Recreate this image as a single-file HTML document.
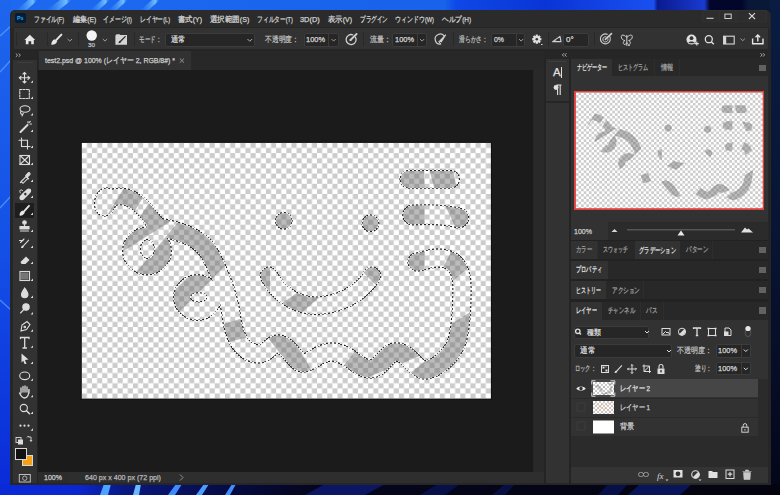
<!DOCTYPE html><html><head><meta charset="utf-8"><style>*{margin:0;padding:0;box-sizing:border-box}
html,body{width:780px;height:495px;overflow:hidden}
body{position:relative;font-family:"Liberation Sans",sans-serif;background:#1558e6}
.a{position:absolute}
.t{position:absolute;white-space:nowrap;line-height:10px;-webkit-text-stroke:0.25px currentColor}
svg{position:absolute;overflow:visible}</style></head><body>
<svg style="left:0;top:0" width="780" height="495">
<defs>
<linearGradient id="wt" x1="0" x2="1" y1="0" y2="0">
<stop offset="0" stop-color="#1d6af0"/><stop offset=".57" stop-color="#1862ec"/><stop offset=".585" stop-color="#0e48e6"/>
<stop offset=".70" stop-color="#0a34d6"/><stop offset=".838" stop-color="#1a50f0"/><stop offset=".843" stop-color="#0a1a90"/><stop offset=".903" stop-color="#1a3ad0"/><stop offset=".91" stop-color="#02062a"/><stop offset=".95" stop-color="#02062a"/><stop offset=".96" stop-color="#0a1838"/><stop offset="1" stop-color="#0a1838"/></linearGradient>
<linearGradient id="wl" x1="0" x2="0" y1="0" y2="1">
<stop offset="0" stop-color="#1e66ee"/><stop offset=".5" stop-color="#1450e6"/><stop offset="1" stop-color="#0a2ad8"/></linearGradient>
<linearGradient id="wr" x1="0" x2="0" y1="0" y2="1">
<stop offset="0" stop-color="#0a1c42"/><stop offset=".5" stop-color="#081432"/><stop offset="1" stop-color="#04061a"/></linearGradient>
<linearGradient id="wbm" x1="0" x2="1" y1="0" y2="0">
<stop offset="0" stop-color="#0a2ad8"/><stop offset=".1" stop-color="#0a26d0"/><stop offset=".16" stop-color="#081880"/><stop offset=".3" stop-color="#060a40"/>
<stop offset=".4" stop-color="#05061e"/><stop offset="1" stop-color="#04040f"/></linearGradient>
</defs>
<rect x="0" y="0" width="780" height="12" fill="url(#wt)"/>
<rect x="0" y="0" width="11" height="495" fill="url(#wl)"/>
<rect x="770" y="0" width="10" height="495" fill="url(#wr)"/>
<rect x="0" y="484" width="780" height="11" fill="url(#wbm)"/>
<linearGradient id="sk" x1="0" x2="1" y1="0" y2="0"><stop offset="0" stop-color="#2a7af8" stop-opacity="0"/><stop offset=".8" stop-color="#7cc8ff" stop-opacity=".9"/><stop offset="1" stop-color="#2a7af8" stop-opacity="0"/></linearGradient>
<g fill="url(#sk)">
<path d="M14 12 L28 0 L38 0 L24 12Z"/><path d="M44 12 L60 0 L72 0 L56 12Z"/><path d="M88 12 L102 0 L110 0 L96 12Z"/><path d="M106 12 L120 0 L128 0 L114 12Z"/><path d="M138 12 L152 0 L160 0 L146 12Z"/></g>
<g stroke="#6ab0ff" stroke-width="1.4" fill="none" opacity=".6">
<path d="M0 36 L11 26"/><path d="M0 72 L11 60"/><path d="M0 208 L11 196"/><path d="M0 300 L11 310"/></g>
<g>
<path d="M100 495 L104 484 L111 484 L108 495Z" fill="#4ea2ff"/>
<path d="M133 495 L136 484 L141 484 L139 495Z" fill="#6cb8ff"/>
<path d="M168 495 L176 484 L182 484 L175 495Z" fill="#3a8cff"/>
<path d="M196 495 L204 484 L209 484 L202 495Z" fill="#4a9cff"/>
<path d="M225 495 L232 484 L236 484 L230 495Z" fill="#3f8cff"/>
<path d="M305 495 L325 484 L385 484 L365 495Z" fill="#0c1c78" opacity=".8"/>
<path d="M420 495 L438 484 L460 484 L445 495Z" fill="#0a1660" opacity=".7"/>
<path d="M492 495 L505 484 L515 484 L505 495Z" fill="#0a1660" opacity=".6"/>
<path d="M598 495 L608 484 L628 484 L618 495Z" fill="#0a1660" opacity=".7"/>
<path d="M628 495 L640 484 L692 484 L680 495Z" fill="#0c1c78" opacity=".7"/>
</g>
</svg>
<div class="a" style="left:10px;top:10px;width:761.3px;height:475px;background:#262626;border-radius:5px 5px 0 0"></div>
<div class="a" style="left:11px;top:10px;width:759px;height:17.5px;background:#2b2b2b;border-radius:5px 5px 0 0"></div>
<div class="a" style="left:15px;top:13.2px;width:11px;height:10px;background:#001e36;border-radius:2px"></div>
<div class="t" style="left:17.2px;top:14.5px;font-size:5.8px;color:#31a8ff;font-weight:bold;transform:scaleX(0.930);transform-origin:0 0;-webkit-text-stroke:0;line-height:7px">Ps</div>
<div class="t" style="left:34.3px;top:14.5px;font-size:7.6px;color:#d4d4d4;font-weight:normal;transform:scaleX(0.719);transform-origin:0 0;">ファイル(F)</div>
<div class="t" style="left:72.7px;top:14.5px;font-size:7.6px;color:#d4d4d4;font-weight:normal;transform:scaleX(0.892);transform-origin:0 0;">編集(E)</div>
<div class="t" style="left:103px;top:14.5px;font-size:7.6px;color:#d4d4d4;font-weight:normal;transform:scaleX(0.740);transform-origin:0 0;">イメージ(I)</div>
<div class="t" style="left:140px;top:14.5px;font-size:7.6px;color:#d4d4d4;font-weight:normal;transform:scaleX(0.727);transform-origin:0 0;">レイヤー(L)</div>
<div class="t" style="left:178px;top:14.5px;font-size:7.6px;color:#d4d4d4;font-weight:normal;transform:scaleX(0.919);transform-origin:0 0;">書式(Y)</div>
<div class="t" style="left:210px;top:14.5px;font-size:7.6px;color:#d4d4d4;font-weight:normal;transform:scaleX(0.933);transform-origin:0 0;">選択範囲(S)</div>
<div class="t" style="left:257px;top:14.5px;font-size:7.6px;color:#d4d4d4;font-weight:normal;transform:scaleX(0.720);transform-origin:0 0;">フィルター(T)</div>
<div class="t" style="left:300px;top:14.5px;font-size:7.6px;color:#d4d4d4;font-weight:normal;transform:scaleX(0.973);transform-origin:0 0;">3D(D)</div>
<div class="t" style="left:328px;top:14.5px;font-size:7.6px;color:#d4d4d4;font-weight:normal;transform:scaleX(0.919);transform-origin:0 0;">表示(V)</div>
<div class="t" style="left:360px;top:14.5px;font-size:7.6px;color:#d4d4d4;font-weight:normal;transform:scaleX(0.700);transform-origin:0 0;">プラグイン</div>
<div class="t" style="left:395px;top:14.5px;font-size:7.6px;color:#d4d4d4;font-weight:normal;transform:scaleX(0.747);transform-origin:0 0;">ウィンドウ(W)</div>
<div class="t" style="left:441.7px;top:14.5px;font-size:7.6px;color:#d4d4d4;font-weight:normal;transform:scaleX(0.842);transform-origin:0 0;">ヘルプ(H)</div>
<svg style="left:700px;top:10px;" width="71" height="17" viewBox="0 0 71 17">
<rect x="2.5" y="0.5" width="64" height="11.2" rx="1.5" fill="#2d2d2d" stroke="#383838" stroke-width=".6"/><path d="M19.4 0.5 V11.7 M36 0.5 V11.7" stroke="#383838" stroke-width=".6"/>
<path d="M6.5 8.3 H13.6" stroke="#cfcfcf" stroke-width="1.1"/>
<rect x="24.9" y="4.1" width="6.3" height="4.4" fill="none" stroke="#cfcfcf" stroke-width="1"/>
<path d="M48.9 3.2 L55 9 M55 3.2 L48.9 9" stroke="#d8d8d8" stroke-width="1.1"/>
</svg>
<div class="a" style="left:12.5px;top:27px;width:756px;height:23px;background:#323232;border:1px solid #262626"></div>
<div class="a" style="left:16.3px;top:32px;width:1px;height:14px;background:#282828;"></div>
<div class="a" style="left:46.5px;top:32px;width:1px;height:14px;background:#282828;"></div>
<div class="a" style="left:77.5px;top:32px;width:1px;height:14px;background:#282828;"></div>
<div class="a" style="left:134px;top:32px;width:1px;height:14px;background:#282828;"></div>
<div class="a" style="left:363px;top:32px;width:1px;height:14px;background:#282828;"></div>
<div class="a" style="left:452.7px;top:32px;width:1px;height:14px;background:#282828;"></div>
<div class="a" style="left:547.5px;top:32px;width:1px;height:14px;background:#282828;"></div>
<div class="a" style="left:594px;top:32px;width:1px;height:14px;background:#282828;"></div>
<svg style="left:0px;top:0px;" width="780" height="60" viewBox="0 0 780 60">
<path d="M24.5 40 L29.8 34.8 L35.2 40 H33.8 V44.3 H31.2 V41.3 H28.5 V44.3 H25.8 V40Z" fill="#e8e8e8"/>
<path d="M51.4 44.7 C51.1 42.4 52.3 40 54.9 39.2 L57.1 41.4 C56.3 43.8 53.8 45 51.4 44.7Z" fill="#e6e6e6"/>
<path d="M56.2 40.2 L61.4 34.6" stroke="#e6e6e6" stroke-width="1.9" stroke-linecap="round"/>
<path d="M67.6 39 L69.8 41.1 L72 39" fill="none" stroke="#a8a8a8" stroke-width=".9"/>
<circle cx="91.7" cy="35.5" r="5.2" fill="#f4f4f4"/>
<path d="M102.8 39 L105 41.1 L107.2 39" fill="none" stroke="#a8a8a8" stroke-width=".9"/>
<path d="M115.4 35.6 L116.6 34.3 H119.5 L120.5 35 H127 V44.7 H115.4Z" fill="#d4d4d4"/>
<path d="M118.6 43.2 C118.4 42 119 41 120.3 40.7 L121.2 41.6 C121 42.8 120 43.3 118.6 43.2Z" fill="#2a2a2a"/>
<path d="M120.8 41 L125.2 36.6" stroke="#2a2a2a" stroke-width="1.3" stroke-linecap="round"/>
</svg>
<div class="t" style="left:88.3px;top:42.2px;font-size:6.2px;color:#b8c4d0;font-weight:normal;transform:scaleX(1.016);transform-origin:0 0;line-height:6px">30</div>
<div class="t" style="left:139px;top:35px;font-size:8px;color:#bcbcbc;font-weight:normal;transform:scaleX(0.688);transform-origin:0 0;">モード：</div>
<div class="a" style="left:164.7px;top:32.8px;width:90.7px;height:14.2px;background:#262626;border:1px solid #3c3c3c;border-radius:2px"></div>
<div class="t" style="left:170.5px;top:35px;font-size:8px;color:#d8d8d8;font-weight:normal;transform:scaleX(0.906);transform-origin:0 0;">通常</div>
<svg style="left:0px;top:0px;" width="780" height="60" viewBox="0 0 780 60"><path d="M247.5 39 L249.8 41.3 L252.1 39" fill="none" stroke="#bbb" stroke-width=".9"/></svg>
<div class="t" style="left:265px;top:35px;font-size:8px;color:#bcbcbc;font-weight:normal;transform:scaleX(0.850);transform-origin:0 0;">不透明度：</div>
<div class="a" style="left:303.6px;top:32.8px;width:35px;height:14.2px;background:#262626;border:1px solid #3c3c3c;border-radius:2px"></div>
<div class="a" style="left:328px;top:32.8px;width:1px;height:14.2px;background:#3c3c3c;"></div>
<div class="t" style="left:306px;top:35px;font-size:8px;color:#d8d8d8;font-weight:normal;transform:scaleX(0.928);transform-origin:0 0;">100%</div>
<div class="t" style="left:369.5px;top:35px;font-size:8px;color:#bcbcbc;font-weight:normal;transform:scaleX(0.875);transform-origin:0 0;">流量：</div>
<div class="a" style="left:392.4px;top:32.8px;width:34.3px;height:14.2px;background:#262626;border:1px solid #3c3c3c;border-radius:2px"></div>
<div class="a" style="left:417px;top:32.8px;width:1px;height:14.2px;background:#3c3c3c;"></div>
<div class="t" style="left:395px;top:35px;font-size:8px;color:#d8d8d8;font-weight:normal;transform:scaleX(0.928);transform-origin:0 0;">100%</div>
<div class="t" style="left:459px;top:35px;font-size:8px;color:#bcbcbc;font-weight:normal;transform:scaleX(0.725);transform-origin:0 0;">滑らかさ：</div>
<div class="a" style="left:491px;top:32.8px;width:34px;height:14.2px;background:#262626;border:1px solid #3c3c3c;border-radius:2px"></div>
<div class="a" style="left:516px;top:32.8px;width:1px;height:14.2px;background:#3c3c3c;"></div>
<div class="t" style="left:493.5px;top:35px;font-size:8px;color:#d8d8d8;font-weight:normal;transform:scaleX(0.865);transform-origin:0 0;">0%</div>
<div class="a" style="left:563px;top:33px;width:26px;height:13.5px;background:#262626;border:1px solid #3c3c3c;border-radius:2px"></div>
<div class="t" style="left:566px;top:35px;font-size:8px;color:#d8d8d8;font-weight:normal;">0°</div>
<svg style="left:0px;top:0px;" width="780" height="60" viewBox="0 0 780 60">
<path d="M331.5 39 L333.6 41.1 L335.7 39" fill="none" stroke="#a8a8a8" stroke-width=".9"/>
<path d="M420 39 L422.1 41.1 L424.2 39" fill="none" stroke="#a8a8a8" stroke-width=".9"/>
<path d="M519 39 L521.1 41.1 L523.2 39" fill="none" stroke="#a8a8a8" stroke-width=".9"/>
<path d="M355.3 36.8 A5 5 0 1 1 353.2 35" fill="none" stroke="#cfcfcf" stroke-width="1.3"/>
<path d="M350.5 40 L356.6 34" stroke="#cfcfcf" stroke-width="1.8" stroke-linecap="round"/>
<circle cx="350.5" cy="40" r="1.1" fill="#cfcfcf"/>
<path d="M444.5 36.6 A5 5 0 1 0 441 44" fill="none" stroke="#cfcfcf" stroke-width="1.2"/>
<path d="M438.5 41.5 L445.5 34.3 L446.2 35 L441.5 42.5 Z" fill="#cfcfcf"/>
<path d="M438.5 41.5 L441 44.2" stroke="#cfcfcf" stroke-width="1"/>
<g transform="translate(536.8,39.2)" fill="#e0e0e0">
<circle r="3.3"/>
<rect x="-1.1" y="-4.6" width="2.2" height="2" /><rect x="-1.1" y="2.6" width="2.2" height="2"/>
<rect x="-4.6" y="-1.1" width="2" height="2.2"/><rect x="2.6" y="-1.1" width="2" height="2.2"/>
<rect x="-1.1" y="-4.6" width="2.2" height="2" transform="rotate(45)"/><rect x="-1.1" y="2.6" width="2.2" height="2" transform="rotate(45)"/>
<rect x="-4.6" y="-1.1" width="2" height="2.2" transform="rotate(45)"/><rect x="2.6" y="-1.1" width="2" height="2.2" transform="rotate(45)"/>
<circle r="1.3" fill="#323232"/>
</g>
<path d="M541 44.5 H542.6" stroke="#cfcfcf" stroke-width="1"/>
<path d="M552.6 41.6 H561 L560 36.4 Z" fill="none" stroke="#cfcfcf" stroke-width="1.1" stroke-linejoin="round"/>
<path d="M555.8 41.6 A3 3 0 0 0 555.2 39.6" fill="none" stroke="#cfcfcf" stroke-width=".8"/>
<path d="M609.6 36.2 A5 5 0 1 1 607.6 34.4" fill="none" stroke="#cfcfcf" stroke-width="1.1"/>
<path d="M607.8 38.3 A2.6 2.6 0 1 1 606.4 36.9" fill="none" stroke="#cfcfcf" stroke-width="1"/>
<path d="M605.3 39.3 L611.5 33.6" stroke="#cfcfcf" stroke-width="1.6" stroke-linecap="round"/>
<path d="M626.8 35 V46 M626.8 37.5 C624.5 35 621.5 34 621.3 36.5 C621.2 39 623 40.3 625 40.5 C623 41.3 622.8 43.5 624 44.3 C625.2 45 626.5 43.6 626.8 42.5 M626.8 37.5 C629.1 35 632.1 34 632.3 36.5 C632.4 39 630.6 40.3 628.6 40.5 C630.6 41.3 630.8 43.5 629.6 44.3 C628.4 45 627.1 43.6 626.8 42.5" fill="none" stroke="#cfcfcf" stroke-width="1"/>
<path d="M628 45.5 H630" stroke="#cfcfcf" stroke-width=".8"/>
<circle cx="691.5" cy="39.6" r="5" fill="#e0e0e0"/>
<circle cx="691.5" cy="38.2" r="1.9" fill="#323232"/>
<path d="M688.3 43.3 C688.8 40.8 694.2 40.8 694.7 43.3Z" fill="#323232"/>
<path d="M694.8 43.6 H698.8 M696.8 41.6 V45.6" stroke="#e0e0e0" stroke-width="1.1"/>
<circle cx="708.8" cy="39.2" r="3.5" fill="none" stroke="#e0e0e0" stroke-width="1.3"/>
<path d="M711.3 41.7 L713.8 44.2" stroke="#e0e0e0" stroke-width="1.5"/>
<rect x="723.6" y="36.2" width="10.6" height="7.8" fill="none" stroke="#d8d8d8" stroke-width="1.1"/>
<rect x="723.6" y="36.2" width="2.6" height="7.8" fill="#d8d8d8"/>
<path d="M740.5 38.6 L742.7 40.7 L744.9 38.6" fill="none" stroke="#a8a8a8" stroke-width=".9"/>
<path d="M752.6 38.5 V43.8 H763 V38.5" fill="none" stroke="#e6e6e6" stroke-width="1.4"/>
<path d="M757.8 41.5 V35 M755.5 37.2 L757.8 34.9 L760.1 37.2" fill="none" stroke="#e6e6e6" stroke-width="1.4"/>
</svg>
<div class="a" style="left:12.5px;top:50.5px;width:24.5px;height:9.5px;background:#262626;"></div>
<svg style="left:0px;top:0px;" width="60" height="60" viewBox="0 0 60 60"><path d="M15.8 53.5 L17.6 55.2 L15.8 56.9 M18.6 53.5 L20.4 55.2 L18.6 56.9" fill="none" stroke="#c8c8c8" stroke-width=".8"/></svg>
<div class="a" style="left:12.5px;top:60px;width:24.8px;height:424px;background:#323232;"></div>
<div class="a" style="left:17px;top:61.8px;width:16px;height:1px;background:#3e3e3e;"></div>
<div class="a" style="left:15px;top:202.8px;width:19px;height:14.8px;background:#1e1e1e;"></div>
<svg style="left:0px;top:0px;" width="60" height="495" viewBox="0 0 60 495">
<g fill="none" stroke="#dcdcdc" stroke-width="1.1" stroke-linecap="round">
<!-- move 77.8 -->
<path d="M24.5 72.5 V83 M19.3 77.8 H29.7 M23 74 L24.5 72.5 L26 74 M23 81.5 L24.5 83 L26 81.5 M21 76.3 L19.3 77.8 L21 79.3 M28 76.3 L29.7 77.8 L28 79.3"/>
<!-- marquee 94 -->
<rect x="19.8" y="89.5" width="9.5" height="9" stroke-dasharray="2 1.3"/>
<!-- lasso 110.5 -->
<ellipse cx="25" cy="109" rx="5" ry="3.3"/><path d="M21 111 C20 113 21 115 23 114 L22 116"/>
<!-- wand 127 -->
<path d="M20.5 132 L27.5 125" stroke-width="2"/><path d="M28 121.5 V123 M30 124 H31.5 M29.3 122.3 L30.3 121.3"/>
<!-- crop 143 -->
<path d="M21.5 138 V146.5 H30 M19 140.3 H27.5 V149"/>
<!-- frame 160 -->
<rect x="20" y="155.5" width="9.5" height="9"/><path d="M20 155.5 L29.5 164.5 M29.5 155.5 L20 164.5"/>
<!-- eyedropper 177 -->
<path d="M21.2 181.5 L20.4 182.6 M21.2 181.5 L26.2 176.5 L28 178.3 L23 183.3 Z" stroke-width="1.1"/><path d="M25.6 175.9 L28.6 178.9 M27.2 177.2 L29.6 174.8 C30.6 173.8 29.6 172.2 28.4 172.8 L26 175.4" fill="#dcdcdc" stroke-width="1.2"/>
<!-- healing 193 -->
<path d="M20.2 195.8 L26.8 189.2 C27.8 188.2 29.8 188.2 30.6 189 C31.4 189.8 31.4 191.8 30.4 192.8 L23.8 199.4 C22.8 200.4 20.8 200.4 20 199.6 C19.2 198.8 19.2 196.8 20.2 195.8Z" fill="#dcdcdc" stroke="none"/><rect x="23.6" y="192.4" width="3.4" height="3.4" transform="rotate(45 25.3 194.1)" fill="#323232"/><path d="M22.5 190.5 C19.8 188.5 19 191.5 20.4 193" stroke-width="1"/>
<!-- brush 210 -->
<path d="M19.6 215.6 C19.3 213.4 20.4 211.2 22.8 210.5 L24.8 212.5 C24.1 214.7 21.8 215.9 19.6 215.6Z" fill="#e8e8e8" stroke="none"/><path d="M24 211.3 L29 205.8" stroke="#e8e8e8" stroke-width="1.8"/>
<!-- stamp 227 -->
<circle cx="24.5" cy="222.5" r="1.8" fill="#dcdcdc"/><path d="M24.5 224.5 V226.5 M20 226.5 H29 V229 H20Z M20.5 231 H28.5" fill="#dcdcdc"/>
<!-- history brush 243 -->
<path d="M21 248 C21 246.5 22 245.5 23 245.5 L28.5 239.5 L29.3 240.3 L23.8 246.3 C23.8 247.5 23 248.3 21 248Z" fill="#dcdcdc" stroke="none"/><path d="M19.5 240.5 H23 M20.5 242.5 L24 239"/>
<!-- eraser 259 -->
<path d="M20.5 262 L26 256.5 L29.5 260 L25.5 264 H21.5Z" fill="#dcdcdc" stroke="none"/>
</g>
<g fill="none" stroke="#dcdcdc" stroke-width="1.1" stroke-linecap="round">
<!-- gradient 276 -->
<rect x="20" y="271.5" width="9.5" height="9"/><rect x="21" y="272.5" width="7.5" height="7" fill="#777" stroke="none"/>
<!-- blur 293 -->
<path d="M24.7 288 C22.5 291 21.5 293 21.5 294.5 A3.2 3.2 0 0 0 28 294.5 C28 293 27 291 24.7 288Z" fill="#dcdcdc"/>
<!-- dodge 309.5 -->
<circle cx="26" cy="307" r="3.2" fill="#dcdcdc"/><path d="M23.8 309.5 L20.5 313"/>
<!-- pen 326.7 -->
<path d="M21 331 L22 325 L27 321.5 L30 324.5 L26.5 329.5Z"/><circle cx="24.8" cy="327" r=".8"/>
<!-- type 342.8 -->
<path d="M20.5 338.5 V337.5 H29 V338.5 M24.7 337.5 V348 M23 348 H26.5" stroke-width="1.3"/>
<!-- path select 359 -->
<path d="M21.5 353.5 L28.5 359.5 L25 360 L26.5 364 H24.5 L23.3 360.8 L21.5 362.5Z" fill="#dcdcdc" stroke="none"/>
<!-- ellipse 375.8 -->
<ellipse cx="24.7" cy="375.8" rx="5" ry="3.8"/>
<!-- hand 392.3 -->
<path d="M21 393 V388 M23 392 V386.5 M25 392 V386 M27 392 V387 M29 393 V389 C29 396 27 398 24.5 398 C22 398 21 396 19.5 393" stroke-width="1.3"/>
<!-- zoom 409 -->
<circle cx="23.8" cy="408" r="3.6"/><path d="M26.5 410.7 L29.5 413.7" stroke-width="1.5"/>
</g>
<g fill="#dcdcdc">
<circle cx="20.5" cy="425.7" r="1.1"/><circle cx="24.5" cy="425.7" r="1.1"/><circle cx="28.5" cy="425.7" r="1.1"/>
<rect x="16" y="437.5" width="5" height="5" fill="none" stroke="#dcdcdc" stroke-width=".9"/><rect x="18" y="439.5" width="5" height="5"/>
<path d="M27 437.5 L28.5 436 L28.5 437 H31 V441 M30 440 L31 441.5 L32 440" fill="none" stroke="#dcdcdc" stroke-width=".9"/>
</g>
<g fill="#dcdcdc"><path d="M30.6 82.8 L33 80.39999999999999 L33 82.8Z"/><path d="M30.6 99 L33 96.6 L33 99Z"/><path d="M30.6 115.5 L33 113.1 L33 115.5Z"/><path d="M30.6 132 L33 129.6 L33 132Z"/><path d="M30.6 148 L33 145.6 L33 148Z"/><path d="M30.6 165 L33 162.6 L33 165Z"/><path d="M30.6 182 L33 179.6 L33 182Z"/><path d="M30.6 198 L33 195.6 L33 198Z"/><path d="M30.6 215 L33 212.6 L33 215Z"/><path d="M30.6 232 L33 229.6 L33 232Z"/><path d="M30.6 248 L33 245.6 L33 248Z"/><path d="M30.6 264 L33 261.6 L33 264Z"/><path d="M30.6 281 L33 278.6 L33 281Z"/><path d="M30.6 298 L33 295.6 L33 298Z"/><path d="M30.6 314.5 L33 312.1 L33 314.5Z"/><path d="M30.6 331.7 L33 329.3 L33 331.7Z"/><path d="M30.6 347.8 L33 345.40000000000003 L33 347.8Z"/><path d="M30.6 364 L33 361.6 L33 364Z"/><path d="M30.6 380.8 L33 378.40000000000003 L33 380.8Z"/><path d="M30.6 397.3 L33 394.90000000000003 L33 397.3Z"/><path d="M30.6 414 L33 411.6 L33 414Z"/><path d="M30.6 430.7 L33 428.3 L33 430.7Z"/></g></svg>
<div class="a" style="left:21.5px;top:454.6px;width:11.5px;height:11.8px;background:#f6a113;border:1px solid #d8d8d8"></div>
<div class="a" style="left:15px;top:448px;width:12.4px;height:12px;background:#121212;border:1px solid #d8d8d8"></div>
<svg style="left:0px;top:0px;" width="60" height="495" viewBox="0 0 60 495"><rect x="19.3" y="474.5" width="11" height="7.5" fill="none" stroke="#bdbdbd" stroke-width="1"/><circle cx="24.8" cy="478.2" r="2.2" fill="none" stroke="#bdbdbd" stroke-width=".9"/></svg>
<div class="a" style="left:37.3px;top:50.5px;width:1px;height:434px;background:#222;"></div>
<div class="a" style="left:38.3px;top:50.5px;width:505.7px;height:19.2px;background:#282828;"></div>
<div class="a" style="left:39px;top:51.3px;width:151.8px;height:18.4px;background:#323232;"></div>
<div class="t" style="left:45px;top:55.5px;font-size:8px;color:#d0d0d0;font-weight:normal;transform:scaleX(0.867);transform-origin:0 0;">test2.psd @ 100% (レイヤー 2, RGB/8#) *</div>
<svg style="left:0px;top:0px;" width="200" height="70" viewBox="0 0 200 70"><path d="M179.8 58.5 L184 62.7 M184 58.5 L179.8 62.7" stroke="#9a9a9a" stroke-width=".9"/></svg>
<div class="a" style="left:38.3px;top:69.7px;width:495.2px;height:402.8px;background:#1b1b1b;"></div>
<div class="a" style="left:533.5px;top:69.7px;width:10.5px;height:402.8px;background:#292929;"></div>
<div class="a" style="left:38.3px;top:472.3px;width:505.7px;height:10.5px;background:#2c2c2c;"></div>
<div class="a" style="left:69px;top:472.3px;width:475px;height:10.5px;background:#2e2e2e;"></div>
<div class="t" style="left:44px;top:473px;font-size:8px;color:#cfcfcf;font-weight:normal;transform:scaleX(0.879);transform-origin:0 0;">100%</div>
<div class="t" style="left:85px;top:473px;font-size:8px;color:#bcbcbc;font-weight:normal;transform:scaleX(0.885);transform-origin:0 0;">640 px x 400 px (72 ppi)</div>
<svg style="left:0px;top:0px;" width="200" height="495" viewBox="0 0 200 495"><path d="M180 474.5 L183 477.5 L180 480.5" fill="none" stroke="#9a9a9a" stroke-width=".9"/></svg>
<div class="a" style="left:10px;top:482.8px;width:761px;height:2.5px;background:#262626;"></div>
<svg style="left:0;top:0" width="780" height="495" viewBox="0 0 780 495"><defs>
<pattern id="chk" patternUnits="userSpaceOnUse" x="81.8" y="142.9" width="10.227500000000001" height="10.227500000000001">
<rect width="10.227500000000001" height="10.227500000000001" fill="#fff"/><rect x="5.1137500000000005" y="0" width="5.1137500000000005" height="5.1137500000000005" fill="#cccccc"/><rect x="0" y="5.1137500000000005" width="5.1137500000000005" height="5.1137500000000005" fill="#cccccc"/></pattern>
<pattern id="ants" patternUnits="userSpaceOnUse" x="0" y="0" width="4" height="4">
<rect width="4" height="4" fill="#f6f6f6"/><rect width="2" height="2" fill="#262626"/><rect x="2" y="2" width="2" height="2" fill="#262626"/></pattern>
<clipPath id="bands"><polygon points="128.9,180 153.9,180 126,225 101,225"/><polygon points="112.2,258.2 157.7,190 210,190 210,196.3"/><polygon points="130,279.8 195,201.8 240,201.8 240,251 200,291 198,270"/><polygon points="170,295 200,265 200,291 176,315"/><polygon points="210,328 250,316 250,336.4 210,347"/><polygon points="261,329 287.5,329 314.3,375 296.7,375"/><polygon points="367.9,335 432,335 432,351 318.3,397.5"/><polygon points="400,395 400,381.1 447,344 452,323.5 490,299.4 490,395"/><polygon points="400,245 425,245 424,280 400,280"/><polygon points="452.1,250 480,250 480,257.3 440,292.4 430,292.4"/><polygon points="395,165 423.6,165 425,192 395,192"/><polygon points="428,165 451.8,165 457.5,192 435.3,192"/><polygon points="398,200 424.5,200 424.5,230 398,230"/><polygon points="443,201 480,201 480,230 456.7,230"/><polygon points="270,205 300,205 300,235 270,235"/><polygon points="355,210 385,210 385,240 355,240"/><polygon points="255,258 270,258 270,292 255,292"/><polygon points="308.6,285 334,285 298.9,315 264.5,315"/><polygon points="352.9,262 392,262 392,292 382.9,292"/></clipPath>
<clipPath id="cv"><rect x="81.8" y="142.9" width="409.1" height="255.7"/></clipPath>
</defs><rect x="80.8" y="141.9" width="411.1" height="257.7" fill="#0f0f0f"/><rect x="81.8" y="142.9" width="409.1" height="255.7" fill="url(#chk)"/><g clip-path="url(#cv)"><g><path d="M108,199.5 C116,195 127,195 136,202 C144,208 150,216 157,225" fill="none" stroke="url(#ants)" stroke-width="17.8" stroke-linecap="round" stroke-linejoin="round" /><path d="M95.25,200.23 A10.2,13.6 10 1 0 115.35,203.77 A10.2,13.6 10 1 0 95.25,200.23Z" fill="none" stroke="url(#ants)" stroke-width="2.3" /><path d="M123.2,251 A23.8,23.3 0 1 0 170.8,251 A23.8,23.3 0 1 0 123.2,251Z M139.70000000000002,249 A7.6,10.2 0 1 0 154.9,249 A7.6,10.2 0 1 0 139.70000000000002,249Z" fill="none" stroke="url(#ants)" stroke-width="2.3" /><path d="M155,227 C180,230 199,238 208,251 C216,264 226,288 230.5,310 C233,335 240,352 258,354 C268,354 270,344 278,344 C290,345 294,362 303,363 C312,363 318,352 332,352 C348,352 358,369 370,369 C382,369 386,352 396,352 C410,352 414,370 426,370 C438,368 452,356 457,341 C461,327 462,306 462,288 C462,265 452,258 438,258 C428,258 422,262 417,262" fill="none" stroke="url(#ants)" stroke-width="19.5" stroke-linecap="round" stroke-linejoin="round" /><path d="M174.2,297.5 A23.3,22.3 0 1 0 220.8,297.5 A23.3,22.3 0 1 0 174.2,297.5Z M189.79999999999998,297.3 A8.8,5.3 0 1 0 207.4,297.3 A8.8,5.3 0 1 0 189.79999999999998,297.3Z" fill="none" stroke="url(#ants)" stroke-width="2.3" /><path d="M269,275.8 C277,292.8 296,306.3 318,305.8 C340,304.8 362,292.8 372,275.8" fill="none" stroke="url(#ants)" stroke-width="18.8" stroke-linecap="round" stroke-linejoin="round" /><path d="M283.8,220.8 L283.8,220.81" fill="none" stroke="url(#ants)" stroke-width="17.9" stroke-linecap="round" stroke-linejoin="round" /><path d="M370.4,223.3 L370.4,223.31" fill="none" stroke="url(#ants)" stroke-width="17.9" stroke-linecap="round" stroke-linejoin="round" /><path d="M409,179.3 L450.5,179.3" fill="none" stroke="url(#ants)" stroke-width="19.1" stroke-linecap="round" stroke-linejoin="round" /><path d="M412.5,215 C428,214 446,215 459,218" fill="none" stroke="url(#ants)" stroke-width="20.8" stroke-linecap="round" stroke-linejoin="round" /></g><g><path d="M108,199.5 C116,195 127,195 136,202 C144,208 150,216 157,225" fill="none" stroke="url(#chk)" stroke-width="15.5" stroke-linecap="round" stroke-linejoin="round" /><path d="M95.25,200.23 A10.2,13.6 10 1 0 115.35,203.77 A10.2,13.6 10 1 0 95.25,200.23Z" fill="url(#chk)" fill-rule="evenodd" /><path d="M123.2,251 A23.8,23.3 0 1 0 170.8,251 A23.8,23.3 0 1 0 123.2,251Z M139.70000000000002,249 A7.6,10.2 0 1 0 154.9,249 A7.6,10.2 0 1 0 139.70000000000002,249Z" fill="url(#chk)" fill-rule="evenodd" /><path d="M155,227 C180,230 199,238 208,251 C216,264 226,288 230.5,310 C233,335 240,352 258,354 C268,354 270,344 278,344 C290,345 294,362 303,363 C312,363 318,352 332,352 C348,352 358,369 370,369 C382,369 386,352 396,352 C410,352 414,370 426,370 C438,368 452,356 457,341 C461,327 462,306 462,288 C462,265 452,258 438,258 C428,258 422,262 417,262" fill="none" stroke="url(#chk)" stroke-width="17.2" stroke-linecap="round" stroke-linejoin="round" /><path d="M174.2,297.5 A23.3,22.3 0 1 0 220.8,297.5 A23.3,22.3 0 1 0 174.2,297.5Z M189.79999999999998,297.3 A8.8,5.3 0 1 0 207.4,297.3 A8.8,5.3 0 1 0 189.79999999999998,297.3Z" fill="url(#chk)" fill-rule="evenodd" /><path d="M269,275.8 C277,292.8 296,306.3 318,305.8 C340,304.8 362,292.8 372,275.8" fill="none" stroke="url(#chk)" stroke-width="16.5" stroke-linecap="round" stroke-linejoin="round" /><path d="M283.8,220.8 L283.8,220.81" fill="none" stroke="url(#chk)" stroke-width="15.6" stroke-linecap="round" stroke-linejoin="round" /><path d="M370.4,223.3 L370.4,223.31" fill="none" stroke="url(#chk)" stroke-width="15.6" stroke-linecap="round" stroke-linejoin="round" /><path d="M409,179.3 L450.5,179.3" fill="none" stroke="url(#chk)" stroke-width="16.8" stroke-linecap="round" stroke-linejoin="round" /><path d="M412.5,215 C428,214 446,215 459,218" fill="none" stroke="url(#chk)" stroke-width="18.5" stroke-linecap="round" stroke-linejoin="round" /></g><g opacity="0.43" clip-path="url(#bands)"><path d="M108,199.5 C116,195 127,195 136,202 C144,208 150,216 157,225" fill="none" stroke="#656565" stroke-width="15.5" stroke-linecap="round" stroke-linejoin="round" /><path d="M95.25,200.23 A10.2,13.6 10 1 0 115.35,203.77 A10.2,13.6 10 1 0 95.25,200.23Z" fill="#656565" fill-rule="evenodd" /><path d="M123.2,251 A23.8,23.3 0 1 0 170.8,251 A23.8,23.3 0 1 0 123.2,251Z M139.70000000000002,249 A7.6,10.2 0 1 0 154.9,249 A7.6,10.2 0 1 0 139.70000000000002,249Z" fill="#656565" fill-rule="evenodd" /><path d="M155,227 C180,230 199,238 208,251 C216,264 226,288 230.5,310 C233,335 240,352 258,354 C268,354 270,344 278,344 C290,345 294,362 303,363 C312,363 318,352 332,352 C348,352 358,369 370,369 C382,369 386,352 396,352 C410,352 414,370 426,370 C438,368 452,356 457,341 C461,327 462,306 462,288 C462,265 452,258 438,258 C428,258 422,262 417,262" fill="none" stroke="#656565" stroke-width="17.2" stroke-linecap="round" stroke-linejoin="round" /><path d="M174.2,297.5 A23.3,22.3 0 1 0 220.8,297.5 A23.3,22.3 0 1 0 174.2,297.5Z M189.79999999999998,297.3 A8.8,5.3 0 1 0 207.4,297.3 A8.8,5.3 0 1 0 189.79999999999998,297.3Z" fill="#656565" fill-rule="evenodd" /><path d="M269,275.8 C277,292.8 296,306.3 318,305.8 C340,304.8 362,292.8 372,275.8" fill="none" stroke="#656565" stroke-width="16.5" stroke-linecap="round" stroke-linejoin="round" /><path d="M283.8,220.8 L283.8,220.81" fill="none" stroke="#656565" stroke-width="15.6" stroke-linecap="round" stroke-linejoin="round" /><path d="M370.4,223.3 L370.4,223.31" fill="none" stroke="#656565" stroke-width="15.6" stroke-linecap="round" stroke-linejoin="round" /><path d="M409,179.3 L450.5,179.3" fill="none" stroke="#656565" stroke-width="16.8" stroke-linecap="round" stroke-linejoin="round" /><path d="M412.5,215 C428,214 446,215 459,218" fill="none" stroke="#656565" stroke-width="18.5" stroke-linecap="round" stroke-linejoin="round" /></g></g></svg>
<div class="a" style="left:544px;top:50.5px;width:224px;height:8.7px;background:#262626;"></div>
<svg style="left:0px;top:0px;" width="780" height="60" viewBox="0 0 780 60"><path d="M564 53.2 L562.3 54.9 L564 56.6 M566.5 53.2 L564.8 54.9 L566.5 56.6" fill="none" stroke="#c8c8c8" stroke-width=".8"/><path d="M760.5 53.2 L762.2 54.9 L760.5 56.6 M763 53.2 L764.7 54.9 L763 56.6" fill="none" stroke="#c8c8c8" stroke-width=".8"/></svg>
<div class="a" style="left:544px;top:59.2px;width:2px;height:425px;background:#242424;"></div>
<div class="a" style="left:546px;top:59.2px;width:23.4px;height:42.3px;background:#323232;"></div>
<div class="a" style="left:549px;top:61px;width:17px;height:1px;background:#3e3e3e;"></div>
<div class="a" style="left:546px;top:102.5px;width:23.4px;height:380px;background:#323232;"></div>
<div class="a" style="left:569.4px;top:59.2px;width:1.6px;height:425px;background:#242424;"></div>
<div class="t" style="left:553px;top:66.3px;font-size:11.5px;color:#e0e0e0;font-weight:normal;line-height:12px">A</div>
<div class="a" style="left:561.2px;top:67.2px;width:1px;height:11px;background:#e0e0e0;"></div>
<svg style="left:0px;top:0px;" width="780" height="120" viewBox="0 0 780 120"><path d="M556.5 85 H561.5 M557.6 85 V95 M560.2 85 V95" fill="none" stroke="#e0e0e0" stroke-width="1.1"/><circle cx="556" cy="87.5" r="2.4" fill="#e0e0e0"/></svg>
<div class="a" style="left:571px;top:59.2px;width:197px;height:17px;background:#282828;"></div>
<div class="a" style="left:571px;top:59.2px;width:41px;height:17px;background:#323232;"></div>
<div class="a" style="left:654px;top:59.2px;width:1px;height:17px;background:#2e2e2e;"></div>
<div class="a" style="left:679px;top:59.2px;width:1px;height:17px;background:#2e2e2e;"></div>
<div class="t" style="left:577px;top:63.2px;font-size:7.6px;color:#e6e6e6;font-weight:bold;transform:scaleX(0.635);transform-origin:0 0;-webkit-text-stroke:0;">ナビゲーター</div>
<div class="t" style="left:617.5px;top:63.2px;font-size:7.6px;color:#a0a0a0;font-weight:normal;transform:scaleX(0.635);transform-origin:0 0;">ヒストグラム</div>
<div class="t" style="left:660.5px;top:63.2px;font-size:7.6px;color:#a0a0a0;font-weight:normal;transform:scaleX(0.781);transform-origin:0 0;">情報</div>
<div class="a" style="left:758.8px;top:64.5px;width:6.8px;height:6.2px;background:#626262;"></div>
<div class="a" style="left:571px;top:76.2px;width:197px;height:145.5px;background:#323232;"></div>
<div class="a" style="left:574.4px;top:91px;width:189.8px;height:118.7px;background:#e23f3f;"></div>
<svg style="left:0;top:0" width="780" height="495" viewBox="0 0 780 495"><defs><pattern id="nchk" patternUnits="userSpaceOnUse" x="575.9" y="92.5" width="5.2" height="5.2">
<rect width="5.2" height="5.2" fill="#fff"/><rect x="2.6" width="2.6" height="2.6" fill="#cccccc"/><rect y="2.6" width="2.6" height="2.6" fill="#cccccc"/></pattern>
<clipPath id="nbands"><polygon points="128.9,180 153.9,180 126,225 101,225"/><polygon points="112.2,258.2 157.7,190 210,190 210,196.3"/><polygon points="130,279.8 195,201.8 240,201.8 240,251 200,291 198,270"/><polygon points="170,295 200,265 200,291 176,315"/><polygon points="210,328 250,316 250,336.4 210,347"/><polygon points="261,329 287.5,329 314.3,375 296.7,375"/><polygon points="367.9,335 432,335 432,351 318.3,397.5"/><polygon points="400,395 400,381.1 447,344 452,323.5 490,299.4 490,395"/><polygon points="400,245 425,245 424,280 400,280"/><polygon points="452.1,250 480,250 480,257.3 440,292.4 430,292.4"/><polygon points="395,165 423.6,165 425,192 395,192"/><polygon points="428,165 451.8,165 457.5,192 435.3,192"/><polygon points="398,200 424.5,200 424.5,230 398,230"/><polygon points="443,201 480,201 480,230 456.7,230"/><polygon points="270,205 300,205 300,235 270,235"/><polygon points="355,210 385,210 385,240 355,240"/><polygon points="255,258 270,258 270,292 255,292"/><polygon points="308.6,285 334,285 298.9,315 264.5,315"/><polygon points="352.9,262 392,262 392,292 382.9,292"/></clipPath></defs><rect x="575.9" y="92.5" width="186.8" height="115.7" fill="url(#nchk)"/><g transform="translate(575.9,92.5) scale(0.45661207528721587) translate(-81.8,-142.9)"><g opacity="0.43" clip-path="url(#nbands)"><path d="M108,199.5 C116,195 127,195 136,202 C144,208 150,216 157,225" fill="none" stroke="#656565" stroke-width="15.5" stroke-linecap="round" stroke-linejoin="round" /><path d="M95.25,200.23 A10.2,13.6 10 1 0 115.35,203.77 A10.2,13.6 10 1 0 95.25,200.23Z" fill="#656565" fill-rule="evenodd" /><path d="M123.2,251 A23.8,23.3 0 1 0 170.8,251 A23.8,23.3 0 1 0 123.2,251Z M139.70000000000002,249 A7.6,10.2 0 1 0 154.9,249 A7.6,10.2 0 1 0 139.70000000000002,249Z" fill="#656565" fill-rule="evenodd" /><path d="M155,227 C180,230 199,238 208,251 C216,264 226,288 230.5,310 C233,335 240,352 258,354 C268,354 270,344 278,344 C290,345 294,362 303,363 C312,363 318,352 332,352 C348,352 358,369 370,369 C382,369 386,352 396,352 C410,352 414,370 426,370 C438,368 452,356 457,341 C461,327 462,306 462,288 C462,265 452,258 438,258 C428,258 422,262 417,262" fill="none" stroke="#656565" stroke-width="17.2" stroke-linecap="round" stroke-linejoin="round" /><path d="M174.2,297.5 A23.3,22.3 0 1 0 220.8,297.5 A23.3,22.3 0 1 0 174.2,297.5Z M189.79999999999998,297.3 A8.8,5.3 0 1 0 207.4,297.3 A8.8,5.3 0 1 0 189.79999999999998,297.3Z" fill="#656565" fill-rule="evenodd" /><path d="M269,275.8 C277,292.8 296,306.3 318,305.8 C340,304.8 362,292.8 372,275.8" fill="none" stroke="#656565" stroke-width="16.5" stroke-linecap="round" stroke-linejoin="round" /><path d="M283.8,220.8 L283.8,220.81" fill="none" stroke="#656565" stroke-width="15.6" stroke-linecap="round" stroke-linejoin="round" /><path d="M370.4,223.3 L370.4,223.31" fill="none" stroke="#656565" stroke-width="15.6" stroke-linecap="round" stroke-linejoin="round" /><path d="M409,179.3 L450.5,179.3" fill="none" stroke="#656565" stroke-width="16.8" stroke-linecap="round" stroke-linejoin="round" /><path d="M412.5,215 C428,214 446,215 459,218" fill="none" stroke="#656565" stroke-width="18.5" stroke-linecap="round" stroke-linejoin="round" /></g></g></svg>
<div class="a" style="left:571px;top:221.7px;width:197px;height:18.3px;background:#323232;"></div>
<div class="a" style="left:608px;top:221.7px;width:160px;height:18.3px;background:#2b2b2b;"></div>
<div class="t" style="left:574px;top:227px;font-size:7.8px;color:#cfcfcf;font-weight:normal;transform:scaleX(0.902);transform-origin:0 0;">100%</div>
<svg style="left:0px;top:0px;" width="780" height="260" viewBox="0 0 780 260"><path d="M627 229.8 H735" stroke="#6a6a6a" stroke-width="1"/><path d="M677.5 235.5 L681 230.5 L684.5 235.5Z" fill="#e8e8e8"/><path d="M611.5 232 L614.5 229 L617.5 232Z" fill="#d8d8d8"/><path d="M741 232.5 L745 227.5 L747 229.5 L748.5 228.5 L753 232.5Z" fill="#e0e0e0"/></svg>
<div class="a" style="left:571px;top:240px;width:197px;height:1px;background:#222;"></div>
<div class="a" style="left:571px;top:241px;width:197px;height:17.7px;background:#282828;"></div>
<div class="a" style="left:571px;top:241px;width:26px;height:17.7px;background:#323232;"></div>
<div class="a" style="left:597px;top:241px;width:1px;height:17.7px;background:#2e2e2e;"></div>
<div class="a" style="left:711.7px;top:241px;width:1px;height:17.7px;background:#2e2e2e;"></div>
<div class="t" style="left:576px;top:245.35px;font-size:7.6px;color:#a0a0a0;font-weight:normal;transform:scaleX(0.667);transform-origin:0 0;">カラー</div>
<div class="t" style="left:603px;top:245.35px;font-size:7.6px;color:#a0a0a0;font-weight:normal;transform:scaleX(0.625);transform-origin:0 0;">スウォッチ</div>
<div class="t" style="left:639px;top:245.35px;font-size:7.6px;color:#e6e6e6;font-weight:bold;transform:scaleX(0.661);transform-origin:0 0;-webkit-text-stroke:0;">グラデーション</div>
<div class="t" style="left:686px;top:245.35px;font-size:7.6px;color:#a0a0a0;font-weight:normal;transform:scaleX(0.688);transform-origin:0 0;">パターン</div>
<div class="a" style="left:758.8px;top:246.65px;width:6.8px;height:6.2px;background:#626262;"></div>
<div class="a" style="left:634.5px;top:241px;width:45.7px;height:17.7px;background:#323232;"></div>
<div class="t" style="left:639px;top:245.5px;font-size:7.6px;color:#e6e6e6;font-weight:bold;transform:scaleX(0.661);transform-origin:0 0;-webkit-text-stroke:0;">グラデーション</div>
<div class="a" style="left:571px;top:258.7px;width:197px;height:2.5px;background:#222;"></div>
<div class="a" style="left:571px;top:261.2px;width:197px;height:17.5px;background:#282828;"></div>
<div class="a" style="left:571px;top:261.2px;width:36.5px;height:17.5px;background:#323232;"></div>
<div class="t" style="left:576px;top:265.45px;font-size:7.6px;color:#e6e6e6;font-weight:bold;transform:scaleX(0.650);transform-origin:0 0;-webkit-text-stroke:0;">プロパティ</div>
<div class="a" style="left:758.8px;top:266.75px;width:6.8px;height:6.2px;background:#626262;"></div>
<div class="a" style="left:571px;top:278.7px;width:197px;height:2.7px;background:#222;"></div>
<div class="a" style="left:571px;top:281.4px;width:197px;height:18px;background:#282828;"></div>
<div class="a" style="left:571px;top:281.4px;width:35px;height:18px;background:#323232;"></div>
<div class="a" style="left:643px;top:281.4px;width:1px;height:18px;background:#2e2e2e;"></div>
<div class="t" style="left:576px;top:285.9px;font-size:7.6px;color:#e6e6e6;font-weight:bold;transform:scaleX(0.625);transform-origin:0 0;-webkit-text-stroke:0;">ヒストリー</div>
<div class="t" style="left:612px;top:285.9px;font-size:7.6px;color:#a0a0a0;font-weight:normal;transform:scaleX(0.700);transform-origin:0 0;">アクション</div>
<div class="a" style="left:758.8px;top:287.2px;width:6.8px;height:6.2px;background:#626262;"></div>
<div class="a" style="left:571px;top:299.4px;width:197px;height:2.2px;background:#222;"></div>
<div class="a" style="left:571px;top:301.6px;width:197px;height:18px;background:#282828;"></div>
<div class="a" style="left:571px;top:301.6px;width:31px;height:18px;background:#323232;"></div>
<div class="a" style="left:640px;top:301.6px;width:1px;height:18px;background:#2e2e2e;"></div>
<div class="a" style="left:662.5px;top:301.6px;width:1px;height:18px;background:#2e2e2e;"></div>
<div class="t" style="left:576px;top:306.1px;font-size:7.6px;color:#e6e6e6;font-weight:bold;transform:scaleX(0.656);transform-origin:0 0;-webkit-text-stroke:0;">レイヤー</div>
<div class="t" style="left:608px;top:306.1px;font-size:7.6px;color:#a0a0a0;font-weight:normal;transform:scaleX(0.675);transform-origin:0 0;">チャンネル</div>
<div class="t" style="left:646px;top:306.1px;font-size:7.6px;color:#a0a0a0;font-weight:normal;transform:scaleX(0.688);transform-origin:0 0;">パス</div>
<div class="a" style="left:758.8px;top:307.40000000000003px;width:6.8px;height:6.2px;background:#626262;"></div>
<div class="a" style="left:571px;top:319.6px;width:197px;height:163px;background:#323232;"></div>
<div class="a" style="left:573.9px;top:325.5px;width:75.4px;height:13.5px;background:#262626;border:1px solid #3c3c3c;border-radius:2px"></div>
<div class="t" style="left:587px;top:327.8px;font-size:8px;color:#d8d8d8;font-weight:normal;transform:scaleX(0.875);transform-origin:0 0;">種類</div>
<div class="a" style="left:574px;top:343.6px;width:98px;height:14px;background:#262626;border:1px solid #3c3c3c;border-radius:2px"></div>
<div class="t" style="left:579.5px;top:346px;font-size:8px;color:#d8d8d8;font-weight:normal;transform:scaleX(0.938);transform-origin:0 0;">通常</div>
<div class="t" style="left:677px;top:346px;font-size:7.8px;color:#bcbcbc;font-weight:normal;transform:scaleX(0.875);transform-origin:0 0;">不透明度：</div>
<div class="a" style="left:715.8px;top:343.6px;width:35px;height:14px;background:#262626;border:1px solid #3c3c3c;border-radius:2px"></div>
<div class="a" style="left:740.5px;top:343.6px;width:1px;height:14px;background:#3c3c3c;"></div>
<div class="t" style="left:717.8px;top:346px;font-size:7.8px;color:#d8d8d8;font-weight:normal;transform:scaleX(0.952);transform-origin:0 0;">100%</div>
<div class="t" style="left:575px;top:364px;font-size:7.8px;color:#bcbcbc;font-weight:normal;transform:scaleX(0.656);transform-origin:0 0;">ロック：</div>
<div class="t" style="left:695px;top:364px;font-size:7.8px;color:#bcbcbc;font-weight:normal;transform:scaleX(0.708);transform-origin:0 0;">塗り：</div>
<div class="a" style="left:715.8px;top:362px;width:35px;height:13.4px;background:#262626;border:1px solid #3c3c3c;border-radius:2px"></div>
<div class="a" style="left:740.5px;top:362px;width:1px;height:13.4px;background:#3c3c3c;"></div>
<div class="t" style="left:717.8px;top:364px;font-size:7.8px;color:#d8d8d8;font-weight:normal;transform:scaleX(0.952);transform-origin:0 0;">100%</div>
<svg style="left:0px;top:0px;" width="780" height="495" viewBox="0 0 780 495">
<g fill="none" stroke="#dcdcdc" stroke-width="1">
<circle cx="577.8" cy="331.3" r="2.2" stroke-width="1.3"/><path d="M579.5 333 L581 334.5" stroke-width="1.5"/>
<path d="M645 331 L647 333 L649 331"/>
<path d="M667 350 L669 352 L671 350"/>
<path d="M743.8 349.5 L745.8 351.5 L747.8 349.5"/>
<path d="M743.8 367.8 L745.8 369.8 L747.8 367.8"/>
<rect x="662" y="328.5" width="8" height="6.5"/><path d="M663 334 L665.5 331.5 L667 333 L668 332 L669.5 334"/>
<circle cx="682" cy="331.8" r="3.6"/><path d="M679.5 334.3 L684.5 329.3 A3.6 3.6 0 0 1 679.5 334.3Z" fill="#dcdcdc"/>
<path d="M693.5 329 V328 H700.5 V329 M697 328 V335.5 M695.8 335.5 H698.2" stroke-width="1.3"/>
<rect x="708.5" y="328.5" width="7" height="7"/><path d="M707.5 328.5 H709.5 M707.5 335.5 H709.5 M714.5 328.5 H716.5 M714.5 335.5 H716.5" stroke-width="1.6"/>
<path d="M725 335.5 V328 H729 L731 330 V335.5Z"/><rect x="724.5" y="332" width="3.5" height="3.5" fill="#dcdcdc"/>
<rect x="745.3" y="327" width="5.4" height="9.5" rx="2.7" stroke="#555"/>
</g>
<circle cx="748" cy="328.5" r="2.6" fill="#e8e8e8"/>
<g fill="#dcdcdc" stroke="none">
<rect x="601.5" y="365.5" width="7" height="7" fill="none" stroke="#dcdcdc" stroke-width="1"/>
<rect x="602.5" y="366.5" width="2" height="2"/><rect x="605.5" y="369.5" width="2" height="2"/><rect x="605.5" y="366.5" width="1" height="1"/>
<path d="M614.5 373 C614.5 371.5 615.5 370.5 616.5 370.5 L621.5 365 L622.3 365.8 L617.3 371.3 C617.3 372.3 616.5 373.3 614.5 373Z"/>
<path d="M632 364.5 V373.5 M627.5 369 H636.5 M630.8 365.7 L632 364.5 L633.2 365.7 M630.8 372.3 L632 373.5 L633.2 372.3 M628.7 367.8 L627.5 369 L628.7 370.2 M635.3 367.8 L636.5 369 L635.3 370.2" fill="none" stroke="#dcdcdc" stroke-width="1"/>
<path d="M642.5 366 H649.5 V373 M644 364.5 V371.5 H651 M644 371.5 L649.5 366" fill="none" stroke="#dcdcdc" stroke-width="1"/>
<rect x="657.5" y="368.5" width="7" height="5.5"/><path d="M659 368.5 V366.5 A2 2 0 0 1 663 366.5 V368.5" fill="none" stroke="#dcdcdc" stroke-width="1.1"/>
<rect x="660.3" y="370" width="1.4" height="2.4" fill="#323232"/>
</g>
</svg>
<div class="a" style="left:571px;top:379px;width:187px;height:57px;background:#323232;"></div>
<div class="a" style="left:590.6px;top:379px;width:167.7px;height:18px;background:#464646;"></div>
<div class="a" style="left:571px;top:397.6px;width:187px;height:1px;background:#2a2a2a;"></div>
<div class="a" style="left:571px;top:416.7px;width:187px;height:1px;background:#2a2a2a;"></div>
<div class="a" style="left:571px;top:435.6px;width:187px;height:31.4px;background:#2b2b2b;"></div>
<div class="a" style="left:758.3px;top:379px;width:9.7px;height:88px;background:#2b2b2b;"></div>
<svg style="left:0px;top:0px;" width="780" height="495" viewBox="0 0 780 495">
<path d="M576.3 388.5 C578 385.8 584 385.8 585.7 388.5 C584 391.2 578 391.2 576.3 388.5Z" fill="#e6e6e6"/><circle cx="581" cy="388.5" r="1.7" fill="#323232"/>
<rect x="577" y="403" width="8" height="8" fill="none" stroke="#3c3c3c" stroke-width="1"/>
<rect x="577" y="422" width="8" height="8" fill="none" stroke="#3c3c3c" stroke-width="1"/>
</svg>
<svg style="left:0;top:0" width="780" height="495" viewBox="0 0 780 495"><defs><pattern id="tchk" patternUnits="userSpaceOnUse" x="593" y="382" width="4" height="4"><rect width="4" height="4" fill="#fff"/><rect x="2" width="2" height="2" fill="#ccc"/><rect y="2" width="2" height="2" fill="#ccc"/></pattern><pattern id="tchk2" patternUnits="userSpaceOnUse" x="593" y="401" width="4" height="4"><rect width="4" height="4" fill="#fff"/><rect x="2" width="2" height="2" fill="#ccc"/><rect y="2" width="2" height="2" fill="#ccc"/></pattern></defs><rect x="593" y="382" width="21" height="13" fill="url(#tchk)"/><g opacity=".25" stroke="#000" stroke-width="1.6" fill="none" stroke-linecap="round"><path d="M596 386 C599 385 600 389 602 391 M603 394 C606 393 609 394 611 390 L611 387 M609 384 H612 M604 387 H604.1"/></g><path d="M591.8 384.5 V380.8 H595.5 M610.5 380.8 H614.8 V384.5 M614.8 392.5 V396.2 H610.5 M595.5 396.2 H591.8 V392.5" fill="none" stroke="#d8d8d8" stroke-width="1"/><rect x="593" y="401" width="21" height="13" fill="url(#tchk2)"/><path d="M595.5 403.5 C598 405 600 408 603 408 C606 408 608 410 611 412 M596 411 C599 409 601 404 604 404 M606 405 C608 404 610 403 612 402" stroke="#f3a26a" stroke-width="1" fill="none" opacity=".75" stroke-dasharray="1.5 1"/><rect x="593" y="420.5" width="21" height="13" fill="#fff"/></svg>
<div class="t" style="left:620px;top:384px;font-size:8px;color:#e0e0e0;font-weight:normal;transform:scaleX(0.776);transform-origin:0 0;">レイヤー 2</div>
<div class="t" style="left:620px;top:403px;font-size:8px;color:#d0d0d0;font-weight:normal;transform:scaleX(0.776);transform-origin:0 0;">レイヤー 1</div>
<div class="t" style="left:620px;top:422.3px;font-size:8px;color:#d0d0d0;font-weight:normal;transform:scaleX(0.906);transform-origin:0 0;">背景</div>
<svg style="left:0px;top:0px;" width="780" height="495" viewBox="0 0 780 495"><rect x="741.8" y="427.2" width="6.4" height="5" fill="none" stroke="#cfcfcf" stroke-width="1"/><path d="M743.2 427.2 V425.4 A1.8 1.8 0 0 1 746.8 425.4 V427.2" fill="none" stroke="#cfcfcf" stroke-width="1"/><rect x="744.5" y="429" width="1" height="1.6" fill="#cfcfcf"/></svg>
<div class="a" style="left:571px;top:467px;width:197px;height:15.8px;background:#343434;"></div>
<svg style="left:0px;top:0px;" width="780" height="495" viewBox="0 0 780 495">
<g fill="none" stroke="#9a9a9a" stroke-width="1"><rect x="638.5" y="472.5" width="5" height="4" rx="2"/><rect x="643.5" y="472.5" width="5" height="4" rx="2"/></g>
<text x="657" y="478.5" font-family="Liberation Serif" font-style="italic" font-size="9" fill="#dcdcdc">fx</text>
<path d="M665.5 479.5 L667 481 L668.5 479.5Z" fill="#dcdcdc"/>
<rect x="673.5" y="470" width="9" height="7.5" fill="#e0e0e0"/><circle cx="678" cy="473.8" r="2.4" fill="#303030"/>
<circle cx="695.5" cy="474.5" r="3.8" fill="none" stroke="#dcdcdc" stroke-width="1.1"/><path d="M692.8 477.2 L698.2 471.8 A3.8 3.8 0 0 1 692.8 477.2Z" fill="#dcdcdc"/><path d="M698.5 479.5 L700 481 L701.5 479.5Z" fill="#dcdcdc"/>
<path d="M708.5 471 H712 L713 472 H717.5 V478 H708.5Z" fill="#e0e0e0"/>
<rect x="726" y="470" width="8" height="8.5" fill="none" stroke="#dcdcdc" stroke-width="1"/><path d="M730 472 V476.5 M727.8 474.2 H732.2" stroke="#dcdcdc" stroke-width="1.2"/>
<path d="M742.5 471.5 H751.5 M745.5 471.5 V470 H748.5 V471.5 M743.5 472.5 H750.5 L750 479.5 H744Z" fill="#c8c8c8" stroke="#c8c8c8" stroke-width=".6"/>
</svg>
</body></html>
